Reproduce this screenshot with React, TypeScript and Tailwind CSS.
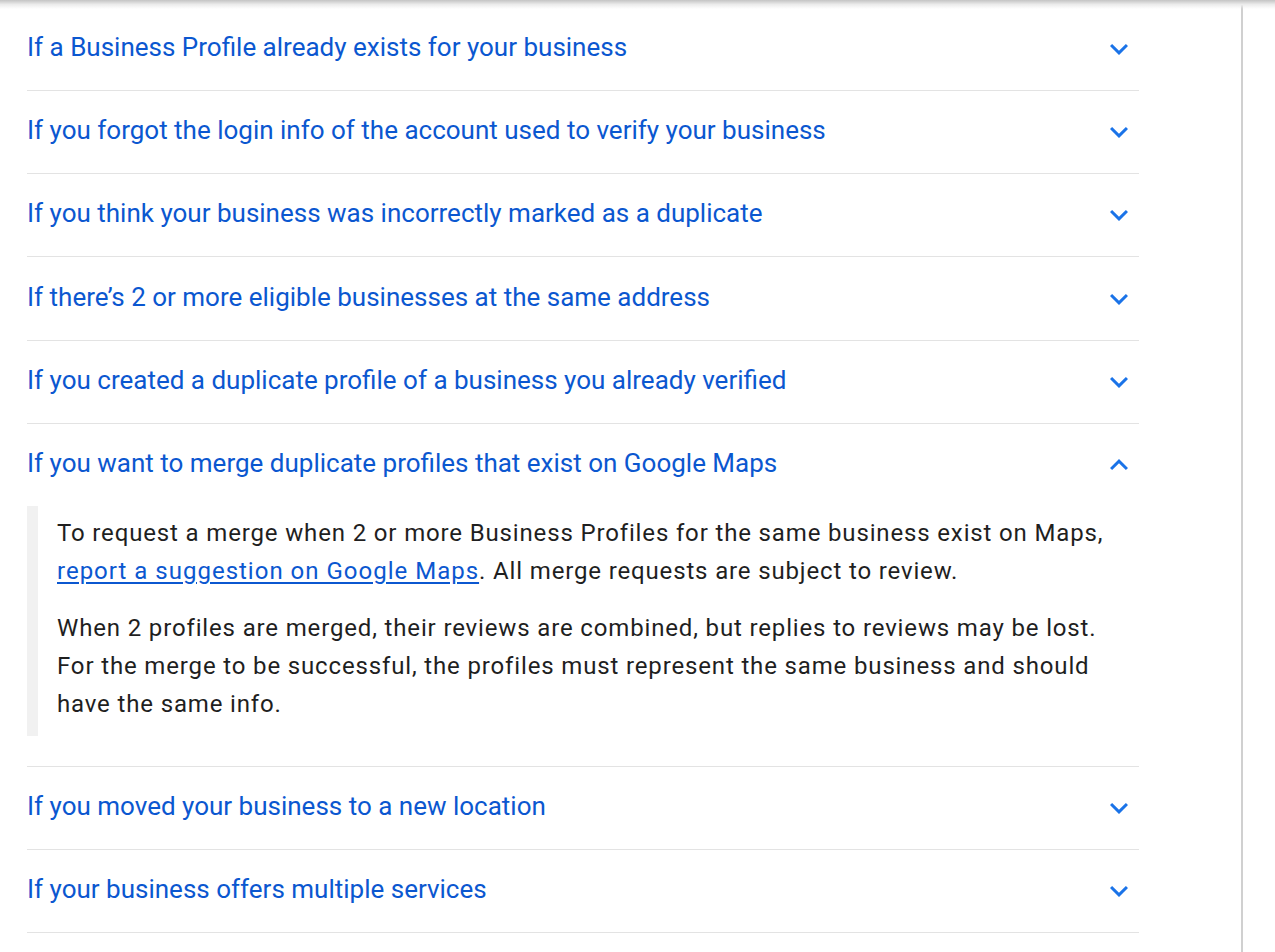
import React from 'react';

const titles = [
  'If a Business Profile already exists for your business',
  'If you forgot the login info of the account used to verify your business',
  'If you think your business was incorrectly marked as a duplicate',
  'If there\u2019s 2 or more eligible businesses at the same address',
  'If you created a duplicate profile of a business you already verified',
  'If you want to merge duplicate profiles that exist on Google Maps',
  'If you moved your business to a new location',
  'If your business offers multiple services',
];

const Chevron = ({ up }: { up?: boolean }) => (
  <svg viewBox="0 0 24 24" className={`w-[36px] h-[36px] shrink-0 ${up ? 'rotate-180' : ''}`} fill="#1a73e8">
    <path d="M16.59 8.59L12 13.17 7.41 8.59 6 10l6 6 6-6z" />
  </svg>
);

const Row = ({ title, open, tall }: { title: string; open?: boolean; tall?: boolean }) => (
  <div className="border-b border-[#e3e3e3]">
    <div className={`${tall ? 'h-[83px]' : 'h-[82px]'} flex items-center justify-between pr-[2px]`}>
      <span className="text-[26px] leading-[32px] mb-[4px] text-[#0b57d0]">{title}</span>
      <Chevron up={open} />
    </div>
    {open && (
      <div className="pb-[30px]">
        <div className="border-l-[11px] border-[#f1f1f1] pl-[19px] pt-[8px] pb-[13px] text-[24px] leading-[38px] tracking-[0.85px] text-[#1f1f1f]">
          <p>
            To request a merge when 2 or more Business Profiles for the same business exist on Maps,{' '}
            <a href="#" className="text-[#0b57d0] underline underline-offset-[3px] tracking-[1px]">report a suggestion on Google Maps</a>. All merge requests are subject to review.
          </p>
          <p className="mt-[19px]">
            When 2 profiles are merged, their reviews are combined, but replies to reviews may be lost. For the merge to be successful, the profiles must represent the same business and should have the same info.
          </p>
        </div>
      </div>
    )}
  </div>
);

export default function App() {
  return (
    <div className="relative min-h-[952px] bg-white overflow-hidden" style={{ fontFamily: 'Roboto, "Noto Sans", sans-serif' }}>
      <div className="absolute top-0 left-0 right-0 h-[9px] bg-gradient-to-b from-[#c4c4c4] via-[#ececec] to-white/0 z-10" />
      <div className="flex">
        <div className="w-[1243px] border-r-2 border-[#d0d0d0] min-h-[952px] pl-[27px] pt-[8px]">
          <div className="w-[1112px]">
            {titles.map((t, i) => (
              <Row key={t} title={t} open={i === 5} tall={i === 3} />
            ))}
          </div>
        </div>
      </div>
    </div>
  );
}
